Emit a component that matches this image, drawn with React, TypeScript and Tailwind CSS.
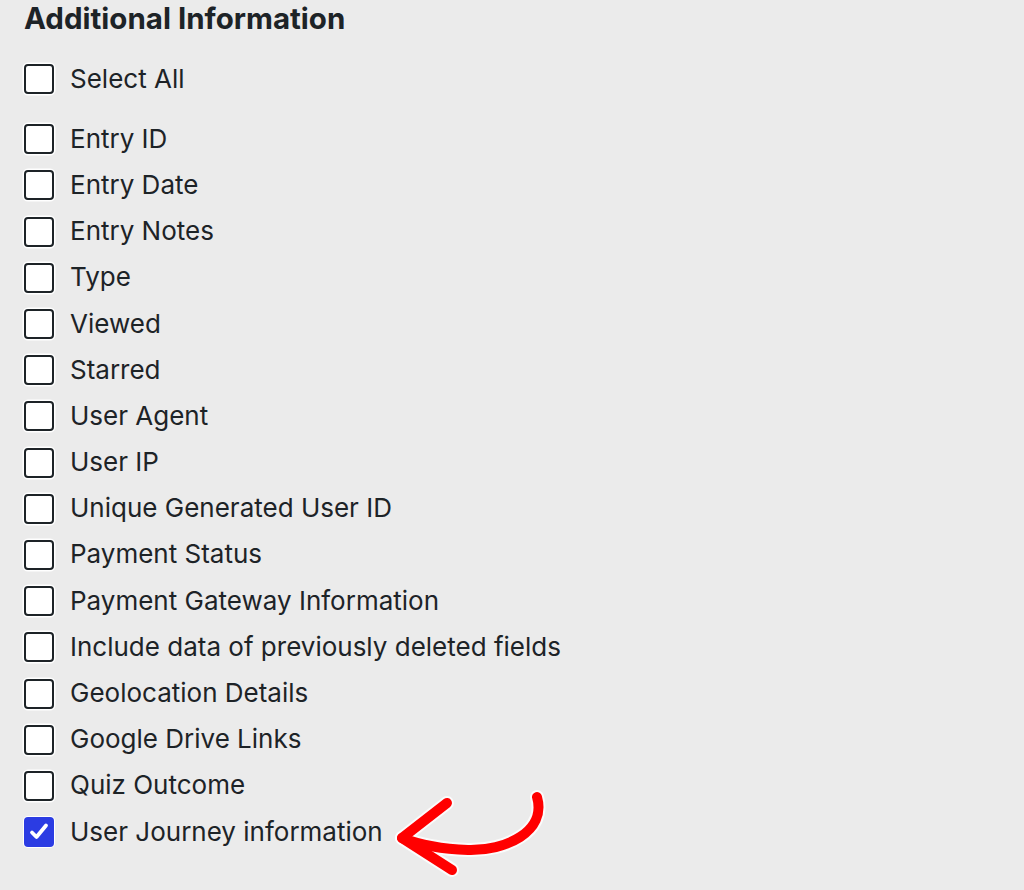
const fields = [
  'Entry ID',
  'Entry Date',
  'Entry Notes',
  'Type',
  'Viewed',
  'Starred',
  'User Agent',
  'User IP',
  'Unique Generated User ID',
  'Payment Status',
  'Payment Gateway Information',
  'Include data of previously deleted fields',
  'Geolocation Details',
  'Google Drive Links',
  'Quiz Outcome',
];

function Box({ checked }: { checked?: boolean }) {
  if (checked) {
    return (
      <span className="flex h-[30px] w-[30px] shrink-0 items-center justify-center rounded-[4px] bg-[#2b3ce3] shadow-[0_0_0_1px_#ffffff]">
        <svg viewBox="0 0 24 24" className="h-[24px] w-[24px]" fill="none" stroke="#fff" strokeWidth={3.8} strokeLinecap="round" strokeLinejoin="round">
          <path d="M5 12.5l4.5 4.5L19 5.5" />
        </svg>
      </span>
    );
  }
  return (
    <span className="h-[30px] w-[30px] shrink-0 rounded-[4px] border-[2.5px] border-[#1d2327] bg-white shadow-[0_0_0_1.5px_#ffffff]" />
  );
}

function Row({ label, checked }: { label: string; checked?: boolean }) {
  return (
    <label className="flex h-[46.2px] items-center gap-4">
      <Box checked={checked} />
      <span className="-mt-[2px] text-[26px] text-[#1d2327]">{label}</span>
    </label>
  );
}

export default function App() {
  return (
    <div className="min-h-[890px] w-[1024px] bg-[#ebebeb] pl-6 font-['Inter',sans-serif]">
      <h2 className="text-[29.5px] font-bold leading-[36px] text-[#1d2327]">Additional Information</h2>
      <div className="mt-[20px] flex flex-col">
        <Row label="Select All" />
        <div className="mt-[14px] flex flex-col">
          {fields.map((f) => (
            <Row key={f} label={f} />
          ))}
          <div className="relative">
            <Row label="User Journey information" checked />
            {/* hand-drawn arrow pointing at the checked option */}
            <svg className="absolute left-[332px] top-[-21px] h-[100px] w-[200px]" viewBox="356 788 200 100" fill="none" strokeLinecap="round" strokeLinejoin="round">
              <g stroke="#ffffff" strokeOpacity={0.8} strokeWidth={14}>
                <path d="M537 797 C547 832 505 851 468 850 C440 849 420 845 402 838" />
                <path d="M447 803 L402 838 L452 870" />
              </g>
              <g stroke="#ff0000" strokeWidth={10}>
                <path d="M537 797 C547 832 505 851 468 850 C440 849 420 845 402 838" />
                <path d="M447 803 L402 838 L452 870" />
              </g>
            </svg>
          </div>
        </div>
      </div>
    </div>
  );
}
